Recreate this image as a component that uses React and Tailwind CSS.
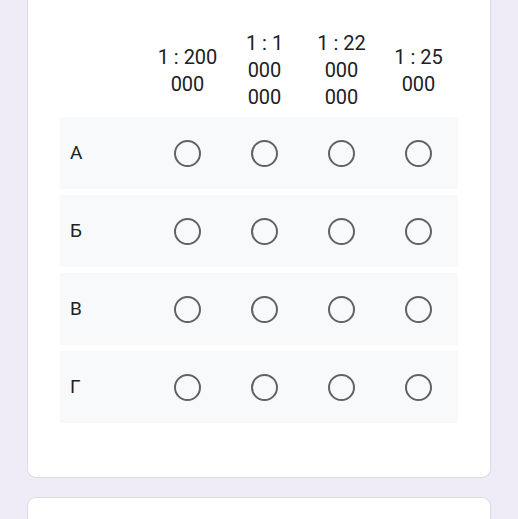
const columns = ['1 : 200 000', '1 : 1 000 000', '1 : 22 000 000', '1 : 25 000'];
const rows = ['А', 'Б', 'В', 'Г'];

const Radio = () => (
  <span className="block h-[27px] w-[27px] rounded-full border-[2.75px] border-[#5f6368]" />
);

export default function App() {
  return (
    <div
      className="h-[519px] w-[518px] overflow-hidden bg-[#efebf7] px-[27px] text-[#202124]"
      style={{fontFamily: 'Roboto, "Noto Sans", Arial, sans-serif'}}
    >
      <div className="rounded-b-[9px] border border-t-0 border-[#dadce0] bg-white px-[32px] pb-[54px] pt-[30px]">
        <div className="flex items-center pb-[6px]">
          <div className="w-[89px] shrink-0" />
          {columns.map((c) => (
            <div
              key={c}
              className="w-[77px] shrink-0 px-[5px] text-center text-[20px] leading-[27px]"
            >
              {c}
            </div>
          ))}
        </div>
        <div className="flex flex-col gap-[6px]">
          {rows.map((r) => (
            <div key={r} className="flex h-[72px] items-center bg-[#f8f9fa]">
              <div className="w-[89px] shrink-0 pl-[10px] text-[19px]">{r}</div>
              {columns.map((c) => (
                <div key={c} className="flex w-[77px] shrink-0 justify-center">
                  <Radio />
                </div>
              ))}
            </div>
          ))}
        </div>
      </div>
      <div className="mt-[19px] h-[60px] rounded-t-[9px] border border-b-0 border-[#dadce0] bg-white" />
    </div>
  );
}
